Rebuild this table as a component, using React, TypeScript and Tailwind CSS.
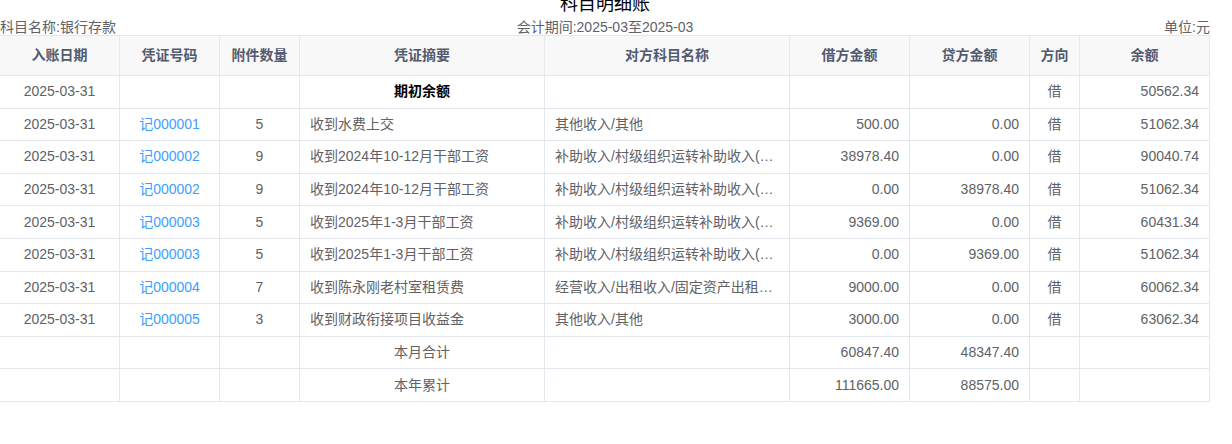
import React from "react";

type Row = {
  date: string;
  no: string;
  att: string;
  summary: string;
  other: string;
  debit: string;
  credit: string;
  dir: string;
  bal: string;
};

const rows: Row[] = [
  { date: "2025-03-31", no: "记000001", att: "5", summary: "收到水费上交", other: "其他收入/其他", debit: "500.00", credit: "0.00", dir: "借", bal: "51062.34" },
  { date: "2025-03-31", no: "记000002", att: "9", summary: "收到2024年10-12月干部工资", other: "补助收入/村级组织运转补助收入(村干部补贴)", debit: "38978.40", credit: "0.00", dir: "借", bal: "90040.74" },
  { date: "2025-03-31", no: "记000002", att: "9", summary: "收到2024年10-12月干部工资", other: "补助收入/村级组织运转补助收入(村干部补贴)", debit: "0.00", credit: "38978.40", dir: "借", bal: "51062.34" },
  { date: "2025-03-31", no: "记000003", att: "5", summary: "收到2025年1-3月干部工资", other: "补助收入/村级组织运转补助收入(村干部补贴)", debit: "9369.00", credit: "0.00", dir: "借", bal: "60431.34" },
  { date: "2025-03-31", no: "记000003", att: "5", summary: "收到2025年1-3月干部工资", other: "补助收入/村级组织运转补助收入(村干部补贴)", debit: "0.00", credit: "9369.00", dir: "借", bal: "51062.34" },
  { date: "2025-03-31", no: "记000004", att: "7", summary: "收到陈永刚老村室租赁费", other: "经营收入/出租收入/固定资产出租收入", debit: "9000.00", credit: "0.00", dir: "借", bal: "60062.34" },
  { date: "2025-03-31", no: "记000005", att: "3", summary: "收到财政衔接项目收益金", other: "其他收入/其他", debit: "3000.00", credit: "0.00", dir: "借", bal: "63062.34" },
];

const td = "border border-[#e4e7ed] px-[10px] h-[32.6px] whitespace-nowrap overflow-hidden text-ellipsis";

export default function App() {
  return (
    <div
      className="w-[1210px] text-[14px] text-[#606266] bg-white"
      style={{ fontFamily: '"Liberation Sans", "Noto Sans CJK SC", sans-serif' }}
    >
      <div className="-mt-[5px] h-[25px] text-center text-[18px] leading-[18px] text-black">科目明细账</div>
      <div className="flex h-[15px] items-end justify-between leading-[15px]">
        <div className="w-[300px]">科目名称:银行存款</div>
        <div className="text-center">会计期间:2025-03至2025-03</div>
        <div className="w-[300px] text-right">单位:元</div>
      </div>
      <table className="-ml-[1px] w-[1210px] table-fixed border-collapse">
        <colgroup>
          <col className="w-[120px]" />
          <col className="w-[100px]" />
          <col className="w-[80px]" />
          <col className="w-[245px]" />
          <col className="w-[245px]" />
          <col className="w-[120px]" />
          <col className="w-[120px]" />
          <col className="w-[50px]" />
          <col className="w-[130px]" />
        </colgroup>
        <thead>
          <tr className="bg-[#f8f8f9] text-[#515a6e] font-bold">
            {["入账日期", "凭证号码", "附件数量", "凭证摘要", "对方科目名称", "借方金额", "贷方金额", "方向", "余额"].map((h) => (
              <th key={h} className="border border-[#e4e7ed] h-[40px] text-center font-bold px-[10px]">
                {h}
              </th>
            ))}
          </tr>
        </thead>
        <tbody>
          <tr>
            <td className={`${td} text-center`}>2025-03-31</td>
            <td className={td}></td>
            <td className={td}></td>
            <td className={`${td} text-center font-bold text-black`}>期初余额</td>
            <td className={td}></td>
            <td className={td}></td>
            <td className={td}></td>
            <td className={`${td} text-center`}>借</td>
            <td className={`${td} text-right`}>50562.34</td>
          </tr>
          {rows.map((r, i) => (
            <tr key={i}>
              <td className={`${td} text-center`}>{r.date}</td>
              <td className={`${td} text-center text-[#409eff]`}>{r.no}</td>
              <td className={`${td} text-center`}>{r.att}</td>
              <td className={`${td} text-left`}>{r.summary}</td>
              <td className={`${td} text-left`}>{r.other}</td>
              <td className={`${td} text-right`}>{r.debit}</td>
              <td className={`${td} text-right`}>{r.credit}</td>
              <td className={`${td} text-center`}>{r.dir}</td>
              <td className={`${td} text-right`}>{r.bal}</td>
            </tr>
          ))}
          <tr>
            <td className={td}></td>
            <td className={td}></td>
            <td className={td}></td>
            <td className={`${td} text-center`}>本月合计</td>
            <td className={td}></td>
            <td className={`${td} text-right`}>60847.40</td>
            <td className={`${td} text-right`}>48347.40</td>
            <td className={td}></td>
            <td className={td}></td>
          </tr>
          <tr>
            <td className={td}></td>
            <td className={td}></td>
            <td className={td}></td>
            <td className={`${td} text-center`}>本年累计</td>
            <td className={td}></td>
            <td className={`${td} text-right`}>111665.00</td>
            <td className={`${td} text-right`}>88575.00</td>
            <td className={td}></td>
            <td className={td}></td>
          </tr>
        </tbody>
      </table>
    </div>
  );
}
